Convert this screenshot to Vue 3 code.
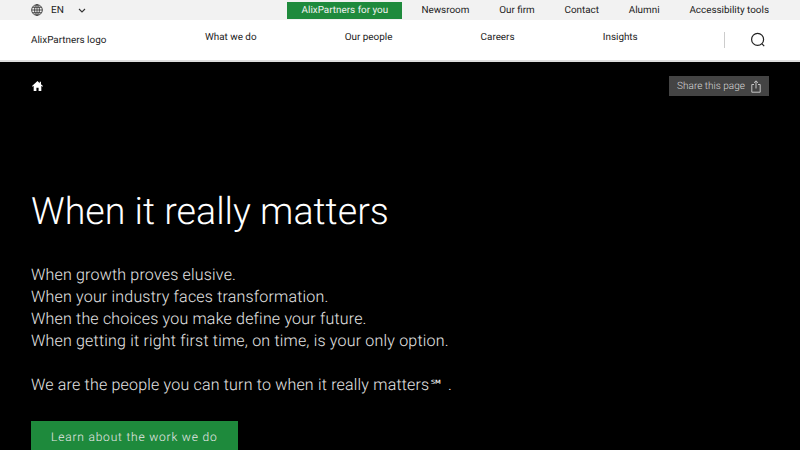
<script setup>
const utility = ['Newsroom', 'Our firm', 'Contact', 'Alumni', 'Accessibility tools']
const mainNav = ['What we do', 'Our people', 'Careers', 'Insights']
const lines = [
  'When growth proves elusive.',
  'When your industry faces transformation.',
  'When the choices you make define your future.',
  'When getting it right first time, on time, is your only option.'
]
</script>

<template>
  <div class="page">
    <div class="utility">
      <div class="lang">
        <svg class="globe" width="12" height="12" viewBox="0 0 13 13" fill="none" stroke="#333" stroke-width="0.9">
          <circle cx="6.5" cy="6.5" r="5.8" />
          <ellipse cx="6.5" cy="6.5" rx="2.6" ry="5.8" />
          <path d="M6.5.7v11.6M.7 6.5h11.6M1.5 3.6h10M1.5 9.4h10" />
        </svg>
        <span class="lang-code">EN</span>
        <svg width="8" height="5" viewBox="0 0 8 5" fill="none" stroke="#333" stroke-width="1.1">
          <path d="M1 1l3 3 3-3" />
        </svg>
      </div>
      <nav class="utility-links">
        <a class="for-you">AlixPartners for you</a>
        <a v-for="item in utility" :key="item" class="utility-link">{{ item }}</a>
      </nav>
    </div>

    <header class="masthead">
      <div class="logo">AlixPartners logo</div>
      <nav class="main-nav">
        <a v-for="item in mainNav" :key="item" class="main-link">{{ item }}</a>
      </nav>
      <div class="search-zone">
        <svg width="16" height="16" viewBox="0 0 16 16" fill="none" stroke="#222" stroke-width="1.2">
          <circle cx="7.6" cy="7.4" r="6" />
          <path d="M12 11.8l2.2 2.4" />
        </svg>
      </div>
    </header>

    <main class="hero">
      <div class="crumb-row">
        <svg class="home" width="11" height="10" viewBox="0 0 12 11" fill="#fff">
          <path d="M6 0L0 5.4l.7.8L1.8 5.3V11h3V7.4h2.4V11h3V5.3l1.1.9.7-.8L9.8 3.6V.8H8.4v1.6z" />
        </svg>
        <button class="share">
          <span>Share this page</span>
          <svg width="10" height="13" viewBox="0 0 10 13" fill="none" stroke="#c4c4c4" stroke-width="1">
            <path d="M3 4.5H.8v7.7h8.4V4.5H7M5 8.5V.9M3 2.8L5 .9l2 1.9" />
          </svg>
        </button>
      </div>
      <h1>When it really matters</h1>
      <div class="copy">
        <p v-for="line in lines" :key="line">{{ line }}</p>
        <p class="closing">We are the people you can turn to when it really matters<span class="mark">℠</span> .</p>
      </div>
      <a class="cta">Learn about the work we do</a>
    </main>
  </div>
</template>

<style>
html, body { margin: 0; background: #000; overflow: hidden; }
</style>

<style scoped>
.page {
  width: 800px;
  height: 450px;
  overflow: hidden;
  font-family: Roboto, "Liberation Sans", sans-serif;
  text-rendering: geometricPrecision;
  background: #000;
}
.utility {
  height: 20px;
  background: #f2f2f2;
  display: flex;
  justify-content: space-between;
  padding: 0 31px;
  font-size: 9.9px;
  color: #222;
}
.lang { display: flex; align-items: center; }
.lang-code { margin: 1px 14px 0 8px; font-size: 10px; line-height: 20px; }
.utility-links { display: flex; align-items: flex-start; }
.for-you {
  width: 115px;
  height: 17px;
  margin-top: 2px;
  background: #1e8a3c;
  color: #f2f2f2;
  text-align: center;
  line-height: 17px;
}
.utility-link { margin-left: 29.8px; line-height: 21px; white-space: nowrap; }
.for-you + .utility-link { margin-left: 19px; }
.masthead {
  height: 40px;
  background: #fff;
  display: flex;
  padding: 0 31px;
  color: #222;
  font-size: 9.9px;
  border-bottom: 2px solid #ddd;
}
.logo { width: 174px; line-height: 41px; white-space: nowrap; }
.main-nav { display: flex; gap: 88.2px; line-height: 35px; white-space: nowrap; }
.search-zone {
  margin-left: auto;
  display: flex;
  align-items: center;
  height: 16px;
  margin-top: 12px;
  padding-left: 25px;
  margin-right: 3px;
  border-left: 1px solid #ccc;
}
.hero { padding: 0 31px; color: #fff; }
.crumb-row {
  display: flex;
  justify-content: space-between;
  align-items: center;
  padding-top: 14px;
}
.home { margin-left: 1px; margin-top: -1px; }
.share {
  width: 100px;
  height: 20px;
  border: 0;
  padding: 0;
  background: #444;
  color: #d8d8d8;
  font: 300 10px Roboto, sans-serif;
  text-rendering: geometricPrecision;
  display: flex;
  align-items: center;
  justify-content: center;
  gap: 6px;
}
h1 {
  margin: 91px 0 0;
  font-size: 37.6px;
  line-height: 50px;
  font-weight: 300;
}
.copy { margin-top: 27px; font-size: 16px; font-weight: 300; line-height: 22px; letter-spacing: 0.19px; color: #e6e6e6; }
.copy p { margin: 0; }
.copy .closing { margin-top: 22px; }
.mark { font-family: "Noto Sans CJK SC", "DejaVu Sans", sans-serif; font-size: 14px; font-weight: 400; line-height: 0; }
.cta {
  display: block;
  width: 206.5px;
  height: 40px;
  margin-top: 25px;
  background: #1e8a3c;
  color: #e8e8e8;
  text-align: center;
  font-size: 12px;
  font-weight: 300;
  letter-spacing: 0.8px;
  line-height: 33px;
}
</style>
